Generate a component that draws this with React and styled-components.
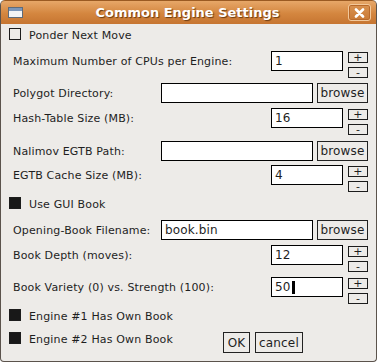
import styled, { createGlobalStyle } from "styled-components";

const Global = createGlobalStyle`
  html, body {
    margin: 0;
    padding: 0;
    background: #ffffff;
  }
  * { box-sizing: border-box; }
`

const Window = styled.div`
  width: 377px;
  height: 362px;
  display: flex;
  flex-direction: column;
  background-color: #EDEBE8;
  border: 1px solid #5B534C;
  border-top: none;
  border-radius: 5px 5px 4px 4px;
  overflow: hidden;
  font-family: "DejaVu Sans", "Liberation Sans", sans-serif;
  font-size: 11px;
  letter-spacing: 0.15px;
  color: #1E1E1E;
`
const TitleBar = styled.div`
  height: 24px;
  flex: none;
  display: flex;
  align-items: center;
  padding: 0 5px 0 7px;
  margin: 0 -1px;
  background: linear-gradient(#E7A768, #D4863F 55%, #C67531);
  border: 1px solid #9A5A22;
  border-bottom: none;
  border-radius: 5px 5px 0 0;
`
const WinIcon = styled.div`
  width: 15px;
  height: 11px;
  border: 1px solid #5E6B7A;
  background: linear-gradient(#7C96B8 0 3px, #F4F4F4 3px);
`
const Title = styled.h1`
  flex: 1;
  margin: 0 0 0 4px;
  text-align: center;
  font-size: 13px;
  font-weight: bold;
  letter-spacing: 0;
  color: #ffffff;
  text-shadow: 1px 1px 1px #6A3A10;
`
const CloseBtn = styled.div`
  width: 23px;
  height: 17px;
  display: flex;
  align-items: center;
  justify-content: center;
  border: 1px solid #F2C89A;
  border-radius: 3px;
  background: linear-gradient(#D99250, #C97A36);
  box-shadow: inset 0 0 0 1px #B8692A;
`
const Body = styled.div`
  display: flex;
  flex-direction: column;
  padding: 0 8px 0 0;
`
const Row = styled.div`
  display: flex;
  align-items: ${p => (p.$top ? "flex-start" : "center")};
  margin-top: ${p => p.$mt}px;
  padding-left: 12px;
`
const Label = styled.span`
  flex: 1;
  white-space: nowrap;
  padding-top: ${p => p.$drop || 0}px;
`
const CheckRow = styled.div`
  display: flex;
  align-items: flex-start;
  margin-top: ${p => p.$mt}px;
  padding-left: 8px;
  height: 12px;
  overflow: visible;
`
const Box = styled.span`
  width: 12px;
  height: 12px;
  flex: none;
  border: 1px solid #1C1C1C;
  background-color: ${p => (p.$on ? "#181818" : "transparent")};
`
const CheckLabel = styled.span`
  margin-left: 8px;
  line-height: 16px;
  white-space: nowrap;
`
const Field = styled.div`
  width: ${p => p.$w}px;
  height: 20px;
  flex: none;
  display: flex;
  align-items: center;
  padding-left: 3px;
  background: #ffffff;
  border: 1px solid #000000;
  font-size: 12px;
`
const Caret = styled.span`
  display: inline-block;
  width: 3px;
  height: 13px;
  margin-left: 1px;
  background: #000000;
`
const Spinner = styled.div`
  display: flex;
  flex-direction: column;
  gap: 4px;
  margin: 1px 0 0 5px;
`
const SmallBtn = styled.div`
  width: 20px;
  height: 11px;
  display: flex;
  align-items: center;
  justify-content: center;
  border: 1px solid #1C1C1C;
  font-size: 11px;
  line-height: 1;
`
const Button = styled.div`
  width: ${p => p.$w}px;
  height: ${p => p.$h || 21}px;
  flex: none;
  display: flex;
  align-items: center;
  justify-content: center;
  border: 1px solid #222222;
  font-size: 12px;
  margin-left: ${p => p.$ml || 0}px;
`
const Actions = styled.div`
  display: flex;
  gap: 5px;
  margin: 0 65px 0 auto;
`

function SpinRow({ label, value, mt, caret }) {
  return (
    <Row $top $mt={mt}>
      <Label $drop={4}>{label}</Label>
      <Field $w={72}>{value}{caret && <Caret />}</Field>
      <Spinner>
        <SmallBtn>+</SmallBtn>
        <SmallBtn>-</SmallBtn>
      </Spinner>
    </Row>
  );
}

function FileRow({ label, value, mt }) {
  return (
    <Row $mt={mt}>
      <Label>{label}</Label>
      <Field $w={152}>{value}</Field>
      <Button $w={51} $h={20} $ml={4}>browse</Button>
    </Row>
  );
}

export default function App() {
  return (
    <Window>
      <Global />
      <TitleBar>
        <WinIcon />
        <Title>Common Engine Settings</Title>
        <CloseBtn>
          <svg width="11" height="10" viewBox="0 0 11 10">
            <path d="M2 1.5 L9 8.5 M9 1.5 L2 8.5" stroke="#ffffff" strokeWidth="2.6" strokeLinecap="round" />
          </svg>
        </CloseBtn>
      </TitleBar>
      <Body>
        <CheckRow $mt={4}>
          <Box />
          <CheckLabel>Ponder Next Move</CheckLabel>
        </CheckRow>
        <SpinRow mt={11} label="Maximum Number of CPUs per Engine:" value="1" />
        <FileRow mt={5} label="Polygot Directory:" value="" />
        <SpinRow mt={5} label="Hash-Table Size (MB):" value="16" />
        <FileRow mt={6} label="Nalimov EGTB Path:" value="" />
        <SpinRow mt={4} label="EGTB Cache Size (MB):" value="4" />
        <CheckRow $mt={5}>
          <Box $on />
          <CheckLabel>Use GUI Book</CheckLabel>
        </CheckRow>
        <FileRow mt={11} label="Opening-Book Filename:" value="book.bin" />
        <SpinRow mt={5} label="Book Depth (moves):" value="12" />
        <SpinRow mt={5} label="Book Variety (0) vs. Strength (100):" value="50" caret />
        <CheckRow $mt={5}>
          <Box $on />
          <CheckLabel>Engine #1 Has Own Book</CheckLabel>
        </CheckRow>
        <CheckRow $mt={11}>
          <Box $on />
          <CheckLabel>Engine #2 Has Own Book</CheckLabel>
          <Actions>
            <Button $w={27}>OK</Button>
            <Button $w={48}>cancel</Button>
          </Actions>
        </CheckRow>
      </Body>
    </Window>
  );
}
